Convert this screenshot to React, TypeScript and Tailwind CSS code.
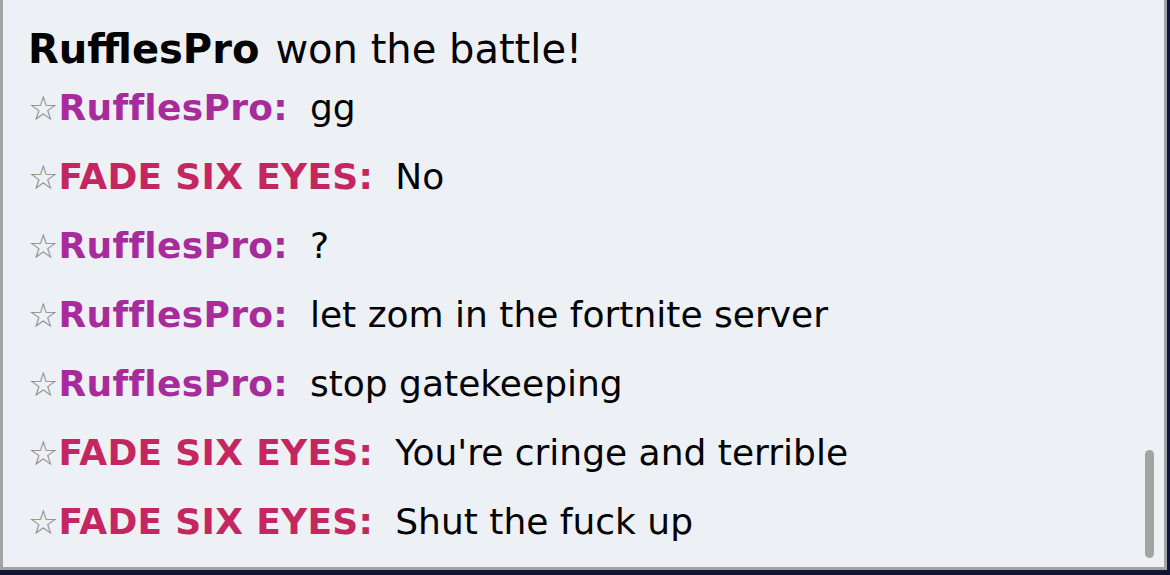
const messages = [
  { name: 'RufflesPro', color: 'text-[#a82b9c]', text: 'gg' },
  { name: 'FADE SIX EYES', color: 'text-[#c42660]', text: 'No' },
  { name: 'RufflesPro', color: 'text-[#a82b9c]', text: '?' },
  { name: 'RufflesPro', color: 'text-[#a82b9c]', text: 'let zom in the fortnite server' },
  { name: 'RufflesPro', color: 'text-[#a82b9c]', text: 'stop gatekeeping' },
  { name: 'FADE SIX EYES', color: 'text-[#c42660]', text: "You're cringe and terrible" },
  { name: 'FADE SIX EYES', color: 'text-[#c42660]', text: 'Shut the fuck up' },
]

function ChatLine({ name, color, text }: { name: string; color: string; text: string }) {
  return (
    <div className="flex items-center h-[69px] whitespace-nowrap">
      <span className="text-[34px] text-[#8a8a8a] font-normal">☆</span>
      <strong className={`font-bold tracking-[0.3px] ${color}`}>{name}:</strong>
      <em className="not-italic ml-[22px] text-black">{text}</em>
    </div>
  )
}

export default function App() {
  return (
    <div className="w-[1170px] h-[575px] bg-[#121636] overflow-hidden">
      <div className="relative w-[1167px] h-[570px] bg-[#edf0f4] border-l-[3px] border-r-[3px] border-b-[3px] border-[#a3a3a3] font-['DejaVu_Sans',sans-serif] text-[36px] leading-none text-black">
        <div className="pl-[25px] pt-[28px]">
          <div className="h-[42px] flex items-center whitespace-nowrap text-[40px]">
            <strong className="font-bold">RufflesPro</strong>
            <span className="ml-[16px]">won the battle!</span>
          </div>
          <div className="mt-[3px]">
            {messages.map((m, i) => (
              <ChatLine key={i} {...m} />
            ))}
          </div>
        </div>
        <div className="absolute right-[10px] top-[450px] w-[9px] h-[108px] rounded-full bg-[#a4a4a4]" />
      </div>
    </div>
  )
}
